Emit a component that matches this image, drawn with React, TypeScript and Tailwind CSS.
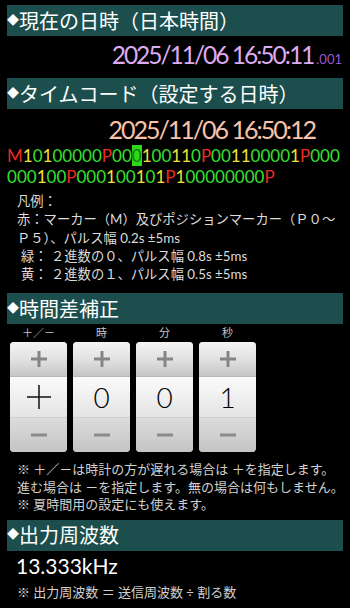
import React from 'react';

const JP = "font-['Lato','Noto_Sans_CJK_JP',sans-serif]";

// JJY 60-bit timecode for 2025/11/06 16:50
const CODE =
  'M' + '10100000' + 'P' + '000100110' + 'P' + '001100001' + 'P' +
  '000000100' + 'P' + '000100101' + 'P' + '100000000' + 'P';
const CURRENT = 12;

const LINES = [CODE.slice(0, 33), CODE.slice(33)];

const SPINNERS = [
  { label: '＋／－', value: '+' },
  { label: '時', value: '0' },
  { label: '分', value: '0' },
  { label: '秒', value: '1' },
];

function Bar({ children }: { children: React.ReactNode }) {
  return (
    <div className={`mx-[7px] h-[31px] bg-[#1b4e4c] flex items-center text-white text-[20px] leading-none ${JP}`}>
      <span className="text-[12px] w-[12px] text-center">◆</span>
      <span>{children}</span>
    </div>
  );
}

function bitColor(c: string) {
  if (c === 'M' || c === 'P') return 'text-[#ee2a22]';
  if (c === '1') return 'text-[#efe034]';
  return 'text-[#37e030]';
}

function PlusIcon() {
  return (
    <svg width="16" height="16" viewBox="0 0 16 16">
      <rect x="6.5" y="0" width="3" height="16" fill="#858585" />
      <rect x="0" y="6.5" width="16" height="3" fill="#858585" />
    </svg>
  );
}

function MinusIcon() {
  return (
    <svg width="16" height="4" viewBox="0 0 16 4">
      <rect x="0" y="0.5" width="16" height="3" fill="#8a8a8a" />
    </svg>
  );
}

function Spinner({ value }: { value: string }) {
  return (
    <div className="w-[57px] rounded-[4px] overflow-hidden flex flex-col shadow-[inset_0_0_0_1px_#bdbdbd]">
      <button className="h-[35px] flex items-center justify-center bg-gradient-to-b from-[#f4f4f4] via-[#e2e2e2] to-[#c6c6c6] border-b border-[#b8b8b8]">
        <PlusIcon />
      </button>
      <div className={`h-[40px] flex items-center justify-center bg-gradient-to-b from-[#fbfbfb] to-[#e4e4e4] text-black text-[28px] font-light ${JP}`}>
        {value === '+' ? (
          <svg width="24" height="24" viewBox="0 0 24 24">
            <rect x="11.25" y="0" width="1.5" height="24" fill="#111" />
            <rect x="0" y="11.25" width="24" height="1.5" fill="#111" />
          </svg>
        ) : (
          value
        )}
      </div>
      <button className="h-[35px] flex items-center justify-center bg-gradient-to-b from-[#dcdcdc] to-[#c4c4c4] border-t border-[#cfcfcf]">
        <MinusIcon />
      </button>
    </div>
  );
}

export default function App() {
  return (
    <main className={`w-[350px] min-h-[608px] bg-black pt-[5px] ${JP}`}>
      <Bar>現在の日時（日本時間）</Bar>
      <div className="h-[42px] pt-[5px] pr-[8px] flex justify-end items-baseline">
        <span className="text-[#dcaaf0] text-[24.5px] leading-[27px] tracking-[-2px]">2025/11/06 16:50:11</span>
        <span className="text-[#9a58d2] text-[13px] leading-none ml-[3px]">.001</span>
      </div>

      <Bar>タイムコード（設定する日時）</Bar>
      <div className="mt-[6px] pr-[35px] text-right text-[#f6c2aa] text-[25px] leading-[28px] tracking-[-2px]">
        2025/11/06 16:50:12
      </div>
      <div className="mt-[2px] px-[7px] text-[17px] leading-[21px]">
        {LINES.map((line, li) => (
          <div key={li} className="flex">
            {line.split('').map((c, i) => {
              const idx = li * 33 + i;
              return idx === CURRENT ? (
                <span key={i} className="bg-[#2fd81a] text-[#0d7a10]">{c}</span>
              ) : (
                <span key={i} className={bitColor(c)}>{c}</span>
              );
            })}
          </div>
        ))}
      </div>

      <div className="mt-[5px] pl-[17px] pr-[10px] text-[#dcdcdc] text-[13.3px] leading-[18.3px]">
        <p>凡例：</p>
        <p>赤：マーカー（M）及びポジションマーカー（Ｐ０～Ｐ５）、パルス幅 0.2s ±5ms</p>
        <p className="pl-[4px]">緑： ２進数の０、パルス幅 0.8s ±5ms</p>
        <p className="pl-[4px]">黄： ２進数の１、パルス幅 0.5s ±5ms</p>
      </div>

      <div className="mt-[10px]">
        <Bar>時間差補正</Bar>
      </div>
      <div className="pl-[10px] flex gap-[6px]">
        {SPINNERS.map(s => (
          <div key={s.label} className="flex flex-col items-center">
            <div className="h-[18px] text-[11px] leading-[17px] text-[#c8c8c8]">{s.label}</div>
            <Spinner value={s.value} />
          </div>
        ))}
      </div>

      <div className="mt-[9px] pl-[17px] text-[#d0d0d0] text-[13px] leading-[17.5px] whitespace-nowrap">
        <p>※ ＋／－は時計の方が遅れる場合は ＋を指定します。</p>
        <p>進む場合は －を指定します。無の場合は何もしません。</p>
        <p>※ 夏時間用の設定にも使えます。</p>
      </div>

      <div className="mt-[6px]">
        <Bar>出力周波数</Bar>
      </div>
      <div className="mt-[2px] pl-[16px] text-white text-[21px] leading-[26px]">13.333kHz</div>
      <div className="mt-[4px] pl-[17px] text-[#d0d0d0] text-[13px] leading-[18px]">
        ※ 出力周波数 ＝ 送信周波数 ÷ 割る数
      </div>
    </main>
  );
}
